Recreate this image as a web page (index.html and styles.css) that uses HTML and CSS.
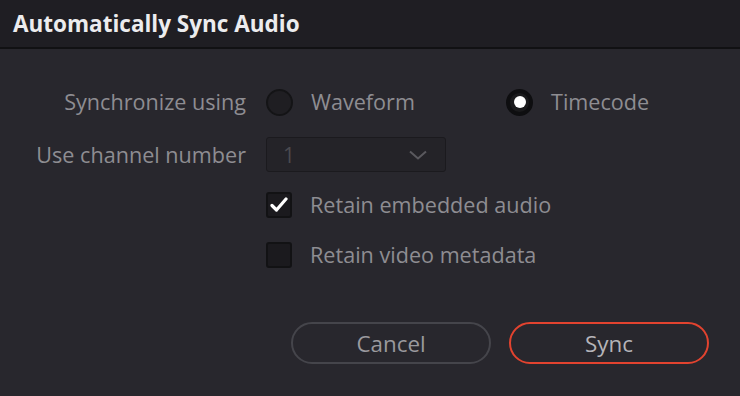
FILE: index.html
```html
<!DOCTYPE html>
<html lang="en">
<head>
  <meta charset="UTF-8">
  <title>Automatically Sync Audio</title>
  <link rel="stylesheet" href="styles.css">
</head>
<body>
  <div class="dialog">
    <header class="title-bar">
      <h1>Automatically Sync Audio</h1>
    </header>

    <div class="form">
      <div class="row row-sync">
        <label class="field-label">Synchronize using</label>
        <div class="radio-group">
          <div class="radio-option waveform">
            <span class="radio"></span>
            <span class="option-text">Waveform</span>
          </div>
          <div class="radio-option">
            <span class="radio checked"></span>
            <span class="option-text">Timecode</span>
          </div>
        </div>
      </div>

      <div class="row row-channel">
        <label class="field-label">Use channel number</label>
        <div class="select disabled">
          <span class="select-value">1</span>
          <svg class="chevron" width="18" height="10" viewBox="0 0 18 10">
            <path d="M1 1.5 L9 8.5 L17 1.5" fill="none" stroke="#5a595e" stroke-width="2"/>
          </svg>
        </div>
      </div>

      <div class="row row-check first">
        <span></span>
        <div class="check-option">
          <span class="checkbox">
            <svg width="18" height="16" viewBox="0 0 18 16">
              <path d="M2 8.5 L6.5 13 L16 2" fill="none" stroke="#ffffff" stroke-width="3.2" stroke-linecap="round" stroke-linejoin="round"/>
            </svg>
          </span>
          <span class="option-text">Retain embedded audio</span>
        </div>
      </div>

      <div class="row row-check">
        <span></span>
        <div class="check-option">
          <span class="checkbox"></span>
          <span class="option-text">Retain video metadata</span>
        </div>
      </div>
    </div>

    <div class="actions">
      <button class="btn">Cancel</button>
      <button class="btn primary">Sync</button>
    </div>
  </div>
</body>
</html>
```

FILE: styles.css
```css
body {
  margin: 0;
  background: #28272d;
  font-family: "Open Sans", "Noto Sans", sans-serif;
  color: #8e8d92;
}
.dialog {
  width: 740px;
  height: 396px;
  background: #28272d;
}
.title-bar {
  height: 47px;
  background: #1f1e23;
  border-bottom: 2px solid #111113;
  padding-left: 13px;
}
.title-bar h1 {
  margin: 0;
  font-size: 22.5px;
  line-height: 47px;
  font-weight: 700;
  color: #ececee;
}
.form {
  padding-top: 35px;
}
.row {
  display: grid;
  grid-template-columns: 246px 1fr;
  column-gap: 20px;
  align-items: center;
}
.field-label {
  text-align: right;
  font-size: 21.6px;
  line-height: 30px;
  color: #8e8d92;
  white-space: nowrap;
}
.row-sync {
  height: 36px;
}
.radio-group {
  display: flex;
  align-items: center;
}
.radio-option {
  display: flex;
  align-items: center;
  gap: 18px;
}
.radio-option.waveform {
  width: 240px;
}
.radio {
  box-sizing: border-box;
  width: 27px;
  height: 27px;
  border-radius: 50%;
  background: #1f1e22;
  border: 2px solid #141416;
  display: flex;
  align-items: center;
  justify-content: center;
}
.radio.checked {
  background: #1a1a1c;
  border: 4px solid #0e0e10;
}
.radio.checked::after {
  content: "";
  width: 12px;
  height: 12px;
  border-radius: 50%;
  background: #ffffff;
}
.option-text {
  font-size: 21.6px;
  line-height: 30px;
  color: #8e8d92;
  white-space: nowrap;
}
.row-channel {
  margin-top: 17px;
}
.select {
  box-sizing: border-box;
  width: 180px;
  height: 35px;
  background: #242328;
  border: 1px solid #1b1a1e;
  border-radius: 3px;
  display: flex;
  align-items: center;
  justify-content: space-between;
  padding: 0 18px 0 16px;
}
.select-value {
  font-size: 21px;
  color: #4b4a4f;
}
.row-check {
  height: 26px;
  margin-top: 24px;
}
.row-check.first {
  margin-top: 20px;
}
.check-option {
  display: flex;
  align-items: center;
  gap: 18px;
  height: 26px;
}
.checkbox {
  box-sizing: border-box;
  width: 26px;
  height: 26px;
  background: #1b1a1e;
  border: 2px solid #121214;
  border-radius: 3px;
  display: flex;
  align-items: center;
  justify-content: center;
}
.actions {
  display: flex;
  justify-content: flex-end;
  gap: 18px;
  padding-right: 31px;
  margin-top: 54px;
}
.btn {
  box-sizing: border-box;
  width: 200px;
  height: 42px;
  border-radius: 21px;
  background: transparent;
  border: 2px solid #45454b;
  font-family: "Open Sans", "Noto Sans", sans-serif;
  font-size: 22.4px;
  color: #9a999e;
}
.btn.primary {
  border-color: #e2432f;
  color: #b5b4b9;
}
```
